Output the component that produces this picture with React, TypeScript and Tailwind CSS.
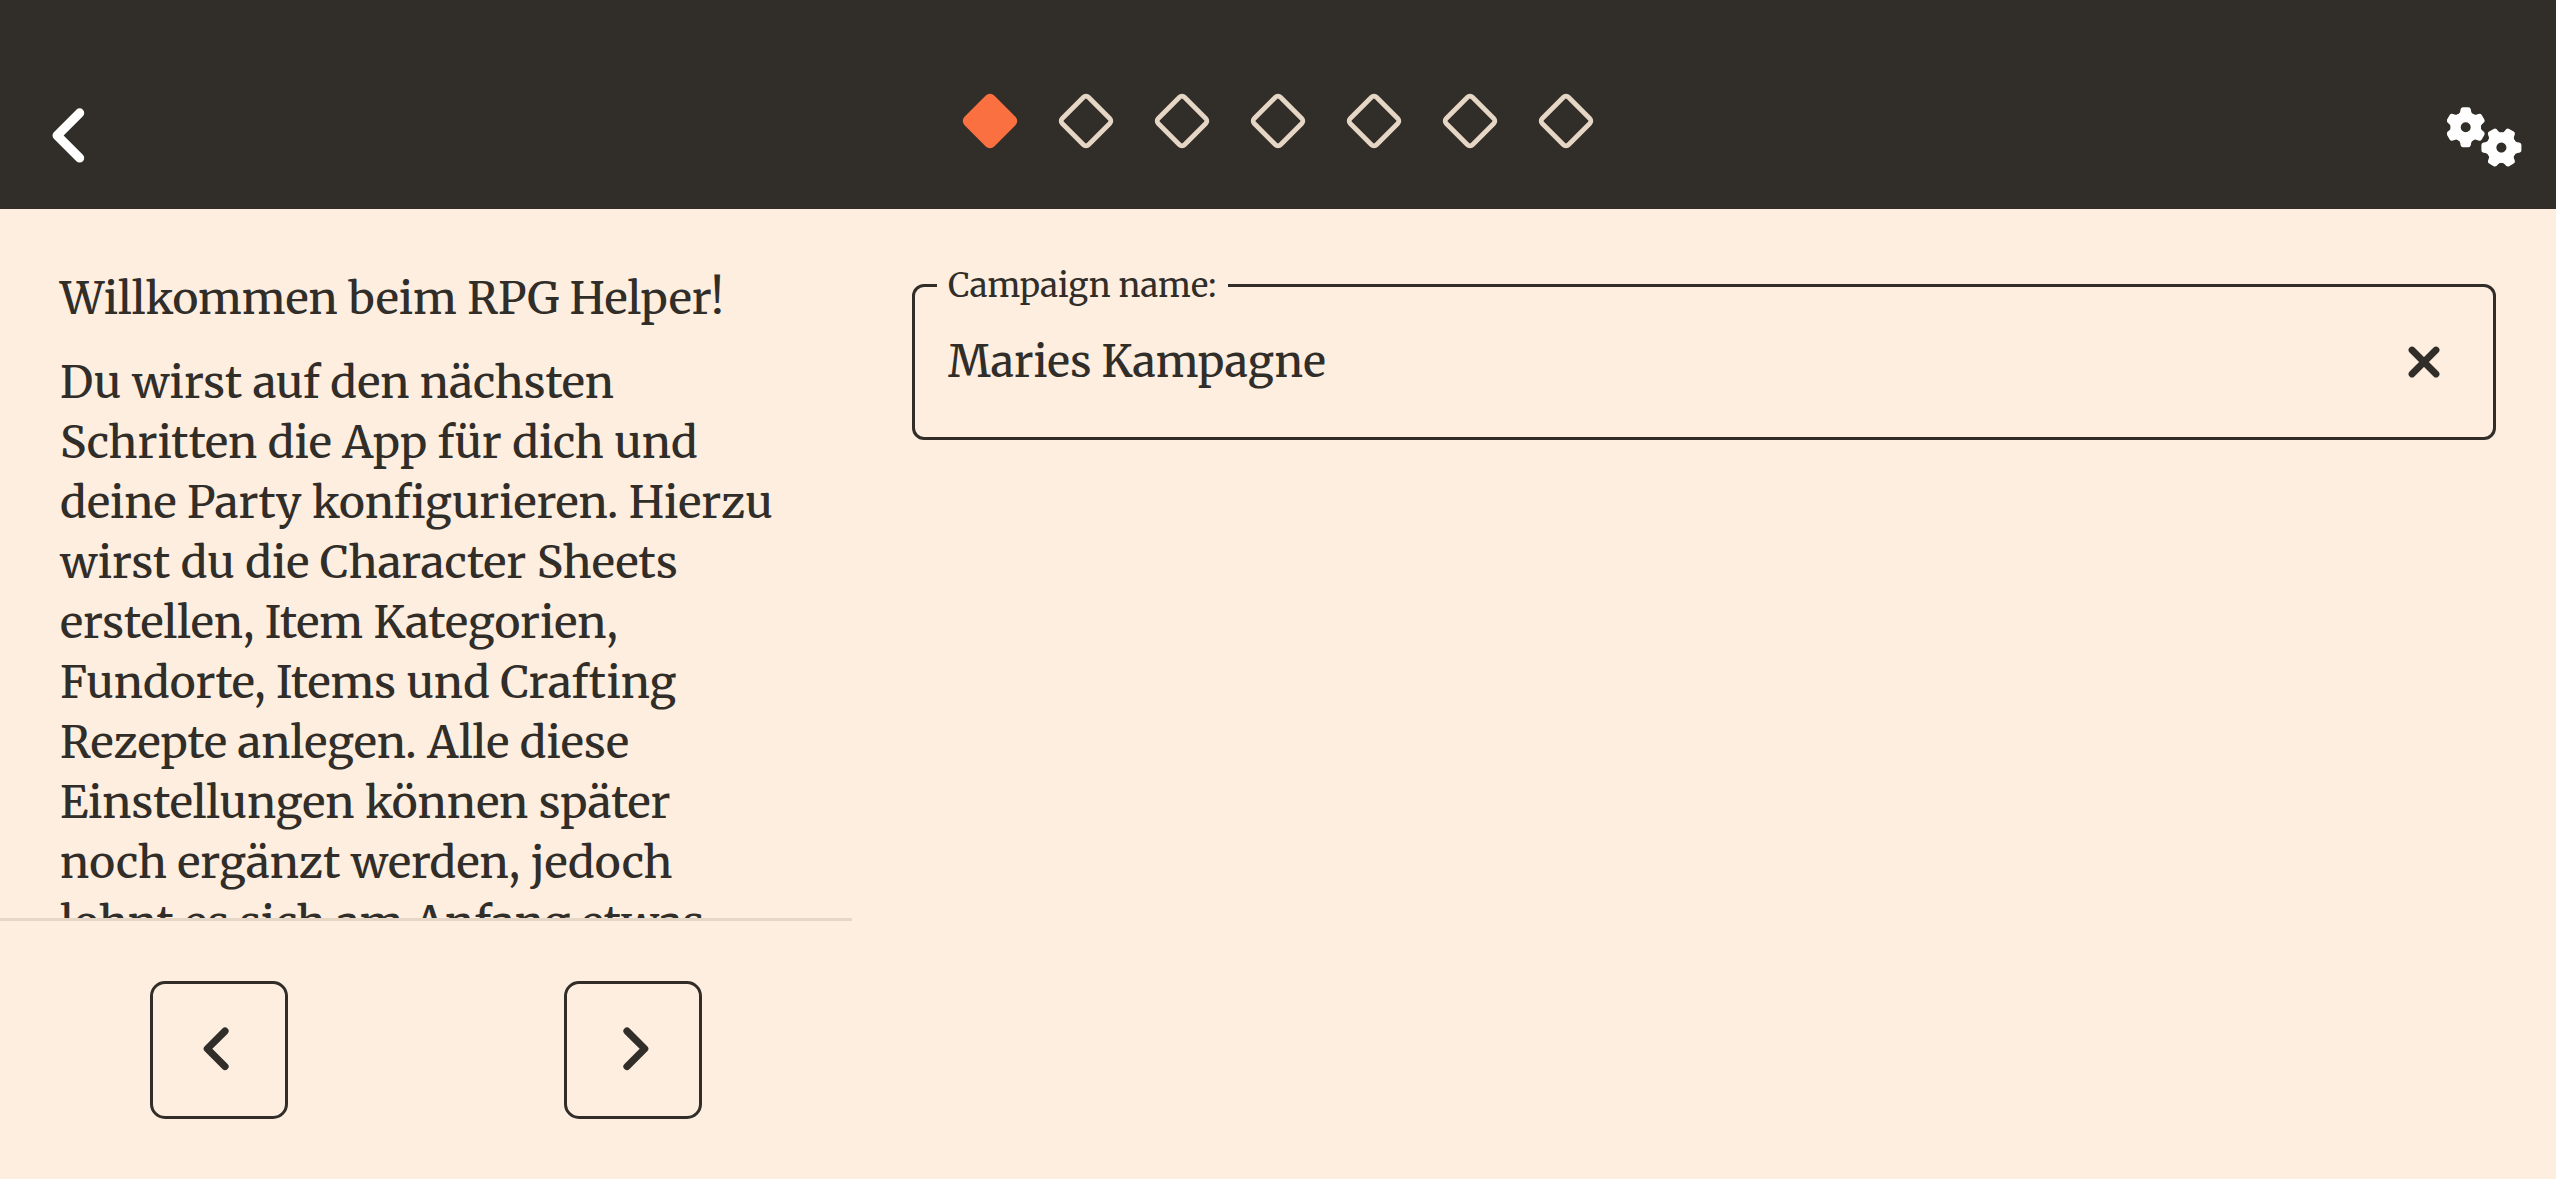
import React, { useState } from "react";

const STEP_COUNT = 7;
const TEETH = ["rotate(0)", "rotate(60)", "rotate(120)", "rotate(180)", "rotate(240)", "rotate(300)"];

function Chevron({ className, right = false }: { className: string; right?: boolean }) {
  return (
    <svg
      viewBox="0 0 22 22"
      className={className}
      fill="none"
      stroke="currentColor"
      strokeLinecap="round"
      strokeLinejoin="round"
      strokeWidth="2.4"
      aria-hidden="true"
    >
      <path d={right ? "M9 4.7L14.9 10.6L9 16.5" : "M13 4.7L7.1 10.6L13 16.5"} />
    </svg>
  );
}

function Gear({ transform }: { transform: string }) {
  return (
    <g transform={transform}>
      {TEETH.map((rotation) => (
        <path
          key={rotation}
          transform={rotation}
          d="M-8.5 -11L-7.6 -13Q-5.6 -14 -5.4 -16Q-5.2 -20 -2.6 -20H2.6Q5.2 -20 5.4 -16Q5.6 -14 7.6 -13L8.5 -11Z"
        />
      ))}
      <path
        fillRule="evenodd"
        d="M-15 0A15 15 0 1 1 15 0A15 15 0 1 1 -15 0ZM-5 0A5 5 0 1 0 5 0A5 5 0 1 0 -5 0Z"
      />
    </g>
  );
}

function Gears() {
  return (
    <svg viewBox="0 0 75 60" className="h-[60px] w-[75px]" fill="currentColor" aria-hidden="true">
      <Gear transform="translate(18.7 20.2)" />
      <Gear transform="translate(54.4 40.6) rotate(30)" />
    </svg>
  );
}

function Step({ active }: { active: boolean }) {
  return (
    <li aria-current={active ? "step" : undefined}>
      <svg viewBox="-30 -30 60 60" className="size-[60px]" aria-hidden="true">
        {active ? (
          <rect x="-21" y="-21" width="42" height="42" rx="6" transform="rotate(45)" fill="#fb7041" />
        ) : (
          <rect
            x="-18.6"
            y="-18.6"
            width="37.2"
            height="37.2"
            rx="3.6"
            transform="rotate(45)"
            fill="none"
            stroke="#e6d6c5"
            strokeWidth="4.8"
          />
        )}
      </svg>
    </li>
  );
}

export default function App() {
  const [step, setStep] = useState(0);
  const [name, setName] = useState("Maries Kampagne");
  const navButton =
    "grid size-[138px] place-items-center rounded-[15px] border-3 border-[#312d28]";

  return (
    <div className="flex h-screen flex-col bg-[#fdeee0] font-['Merriweather','Noto_Serif','DejaVu_Serif',serif] text-[#312d28]">
      <header className="bg-[#312d28] pt-[65px] text-white">
        <div className="grid h-36 grid-cols-[1fr_auto_1fr] items-center">
          <button type="button" aria-label="Zurück" className="grid size-36 place-items-center">
            <Chevron className="size-[84px]" />
          </button>
          <ol className="flex gap-9 pb-8">
            {Array.from({ length: STEP_COUNT }, (_, i) => (
              <Step key={i} active={i === step} />
            ))}
          </ol>
          <button
            type="button"
            aria-label="Einstellungen"
            className="grid size-36 place-items-center justify-self-end"
          >
            <Gears />
          </button>
        </div>
      </header>

      <main className="grid min-h-0 flex-1 grid-cols-[1fr_2fr]">
        <section className="flex min-h-0 min-w-0 flex-col">
          <div className="min-h-0 flex-1 overflow-hidden pt-[60px] pr-[72px] pl-[60px] text-[44px] leading-[60px] font-medium">
            <p>Willkommen beim RPG Helper!</p>
            <p className="mt-6">
              Du wirst auf den nächsten Schritten die App für dich und deine Party konfigurieren.
              Hierzu wirst du die Character Sheets erstellen, Item Kategorien, Fundorte, Items und
              Crafting Rezepte anlegen. Alle diese Einstellungen können später noch ergänzt werden,
              jedoch lohnt es sich am Anfang etwas
            </p>
          </div>
          <div className="flex justify-between border-t-3 border-[#e6d6c5] px-[150px] py-[60px]">
            <button
              type="button"
              aria-label="Vorheriger Schritt"
              className={navButton}
              onClick={() => setStep(Math.max(0, step - 1))}
            >
              <Chevron className="size-[66px]" />
            </button>
            <button
              type="button"
              aria-label="Nächster Schritt"
              className={navButton}
              onClick={() => setStep(Math.min(STEP_COUNT - 1, step + 1))}
            >
              <Chevron right className="size-[66px]" />
            </button>
          </div>
        </section>

        <section className="min-w-0 px-[60px] pt-[75px]">
          <div className="relative flex h-[156px] rounded-xl border-3 border-[#312d28]">
            <label
              htmlFor="campaign"
              className="absolute -top-[25px] left-[22px] bg-[#fdeee0] px-[11px] text-[33px] leading-[48px] whitespace-nowrap"
            >
              Campaign name:
            </label>
            <input
              id="campaign"
              type="text"
              value={name}
              onChange={(e) => setName(e.target.value)}
              className="min-w-0 flex-1 bg-transparent pl-[33px] text-[43px] font-medium outline-none"
            />
            <button
              type="button"
              aria-label="Eingabe löschen"
              className="grid w-[138px] place-items-center"
              onClick={() => setName("")}
            >
              <svg
                viewBox="0 0 32 32"
                className="size-8"
                fill="none"
                stroke="currentColor"
                strokeLinecap="round"
                strokeWidth="6.8"
                aria-hidden="true"
              >
                <path d="M4 4L28 28M28 4L4 28" />
              </svg>
            </button>
          </div>
        </section>
      </main>
    </div>
  );
}
